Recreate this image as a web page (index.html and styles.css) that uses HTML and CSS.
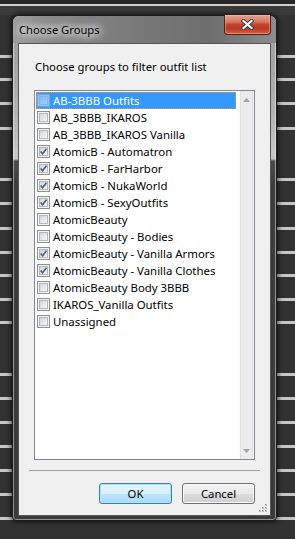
FILE: index.html
```html
<!DOCTYPE html>
<html>
<head>
<meta charset="utf-8">
<title>Choose Groups</title>
<link rel="stylesheet" href="styles.css">
</head>
<body>
<div class="window">
  <div class="titlebar">
    <span class="title">Choose Groups</span>
    <button class="close" aria-label="Close">
      <svg width="13" height="11" viewBox="0 0 13 11"><path d="M2.5 2 L10.5 9 M10.5 2 L2.5 9" stroke="#3a3a3a" stroke-width="4" stroke-linecap="square"/><path d="M2.5 2 L10.5 9 M10.5 2 L2.5 9" stroke="#ffffff" stroke-width="2.2" stroke-linecap="square"/></svg>
    </button>
  </div>
  <div class="client">
    <p class="prompt">Choose groups to filter outfit list</p>
    <div class="listbox">
      <ul class="items">
        <li class="item selected"><span class="cb"><span class="cb-in"></span></span><span class="label">AB-3BBB Outfits</span></li>
        <li class="item"><span class="cb"><span class="cb-in"></span></span><span class="label">AB_3BBB_IKAROS</span></li>
        <li class="item"><span class="cb"><span class="cb-in"></span></span><span class="label">AB_3BBB_IKAROS Vanilla</span></li>
        <li class="item"><span class="cb"><span class="cb-in"><svg class="check" viewBox="0 0 7 7"><path d="M0.6 3.4 L2.6 5.8 L6.4 0.6" fill="none" stroke="#4a5e8e" stroke-width="1.6"/></svg></span></span><span class="label">AtomicB - Automatron</span></li>
        <li class="item"><span class="cb"><span class="cb-in"><svg class="check" viewBox="0 0 7 7"><path d="M0.6 3.4 L2.6 5.8 L6.4 0.6" fill="none" stroke="#4a5e8e" stroke-width="1.6"/></svg></span></span><span class="label">AtomicB - FarHarbor</span></li>
        <li class="item"><span class="cb"><span class="cb-in"><svg class="check" viewBox="0 0 7 7"><path d="M0.6 3.4 L2.6 5.8 L6.4 0.6" fill="none" stroke="#4a5e8e" stroke-width="1.6"/></svg></span></span><span class="label">AtomicB - NukaWorld</span></li>
        <li class="item"><span class="cb"><span class="cb-in"><svg class="check" viewBox="0 0 7 7"><path d="M0.6 3.4 L2.6 5.8 L6.4 0.6" fill="none" stroke="#4a5e8e" stroke-width="1.6"/></svg></span></span><span class="label">AtomicB - SexyOutfits</span></li>
        <li class="item"><span class="cb"><span class="cb-in"></span></span><span class="label">AtomicBeauty</span></li>
        <li class="item"><span class="cb"><span class="cb-in"></span></span><span class="label">AtomicBeauty - Bodies</span></li>
        <li class="item"><span class="cb"><span class="cb-in"><svg class="check" viewBox="0 0 7 7"><path d="M0.6 3.4 L2.6 5.8 L6.4 0.6" fill="none" stroke="#4a5e8e" stroke-width="1.6"/></svg></span></span><span class="label">AtomicBeauty - Vanilla Armors</span></li>
        <li class="item"><span class="cb"><span class="cb-in"><svg class="check" viewBox="0 0 7 7"><path d="M0.6 3.4 L2.6 5.8 L6.4 0.6" fill="none" stroke="#4a5e8e" stroke-width="1.6"/></svg></span></span><span class="label">AtomicBeauty - Vanilla Clothes</span></li>
        <li class="item"><span class="cb"><span class="cb-in"></span></span><span class="label">AtomicBeauty Body 3BBB</span></li>
        <li class="item"><span class="cb"><span class="cb-in"></span></span><span class="label">IKAROS_Vanilla Outfits</span></li>
        <li class="item"><span class="cb"><span class="cb-in"></span></span><span class="label">Unassigned</span></li>
      </ul>
      <div class="scrollbar">
        <span class="sb-btn"><svg width="7" height="4" viewBox="0 0 7 4"><path d="M3.5 0 L7 4 L0 4 Z" fill="#a2a2a2"/></svg></span>
        <span class="sb-track"></span>
        <span class="sb-btn"><svg width="7" height="4" viewBox="0 0 7 4"><path d="M0 0 L7 0 L3.5 4 Z" fill="#a2a2a2"/></svg></span>
      </div>
    </div>
    <hr class="sep">
    <div class="buttons">
      <button class="btn default">OK</button>
      <button class="btn">Cancel</button>
    </div>
    <svg class="grip" width="9" height="9" viewBox="0 0 9 9">
      <g fill="#c2c2c2"><rect x="6" y="0" width="2" height="2"/><rect x="3" y="3" width="2" height="2"/><rect x="6" y="3" width="2" height="2"/><rect x="0" y="6" width="2" height="2"/><rect x="3" y="6" width="2" height="2"/><rect x="6" y="6" width="2" height="2"/></g>
      <g fill="#8e8e8e"><rect x="6" y="0" width="1" height="1"/><rect x="3" y="3" width="1" height="1"/><rect x="6" y="3" width="1" height="1"/><rect x="0" y="6" width="1" height="1"/><rect x="3" y="6" width="1" height="1"/><rect x="6" y="6" width="1" height="1"/></g>
    </svg>
  </div>
</div>
</body>
</html>
```

FILE: styles.css
```css
html, body {
  margin: 0;
}

body {
  width: 295px;
  height: 539px;
  overflow: hidden;
  box-sizing: border-box;
  padding: 15px 0 0 12px;
  font-family: "Noto Sans", "Open Sans", sans-serif;
  font-size: 11.3px;
  color: #000;
  background-color: #323232;
  background-image:
    linear-gradient(to bottom, #282828 0 4px, #cfcfcf 4px 6px, #3a3a3a 6px 15px, transparent 15px),
    linear-gradient(to bottom,
      transparent 55px, #c6c6c6 55px 58px,
      transparent 58px 78px, #c6c6c6 78px 81px,
      transparent 81px 102px, #c6c6c6 102px 105px,
      transparent 105px 127px, #c6c6c6 127px 130px,
      transparent 130px 178px, #c6c6c6 178px 181px,
      transparent 181px 202px, #c6c6c6 202px 205px,
      transparent 205px 227px, #c6c6c6 227px 230px,
      transparent 230px 251px, #c6c6c6 251px 254px,
      transparent 254px 274px, #c6c6c6 274px 277px,
      transparent 277px 298px, #c6c6c6 298px 301px,
      transparent 301px 321px, #c6c6c6 321px 324px,
      transparent 324px 373px, #c6c6c6 373px 376px,
      transparent 376px 397px, #c6c6c6 397px 400px,
      transparent 400px 421px, #c6c6c6 421px 424px,
      transparent 424px 445px, #c6c6c6 445px 448px,
      transparent 448px 469px, #c6c6c6 469px 472px,
      transparent 472px 493px, #c6c6c6 493px 496px,
      transparent 496px 517px, #c6c6c6 517px 520px,
      transparent 520px);
}

/* ---------- window frame ---------- */
.window {
  width: 265px;
  height: 506px;
  box-sizing: border-box;
  display: flex;
  flex-direction: column;
  padding: 0 5px 4px 5px;
  border: 1px solid #1b1b1b;
  border-radius: 7px 7px 4px 4px;
  background: linear-gradient(to bottom,
    #9a9a9a 0, #a6a6a6 50px, #b3b3b3 100px, #c8c8c8 138px, #c4c4c4 143px,
    #4c4c4c 145px, #3c3c3c 170px, #3a3a3a 100%);
  box-shadow: 0 0 5px 1px rgba(0, 0, 0, 0.7), inset 0 0 0 1px rgba(255, 255, 255, 0.45);
}

.titlebar {
  height: 27px;
  flex: none;
  display: flex;
  align-items: flex-start;
  justify-content: space-between;
  margin: 0 -5px;
  padding: 0 5px;
  border-radius: 6px 6px 0 0;
  background: linear-gradient(to right, #9c9c9c 0%, #888 15%, #7a7a7a 45%, #6e6e6e 75%, #8c8c8c 100%);
}

.title {
  margin: 6px 0 0 1px;
  line-height: 15px;
  font-size: 11.2px;
  color: #000;
  text-shadow: 0 0 6px #fff, 0 0 10px #fff, 0 0 14px rgba(255, 255, 255, 0.9);
}

.close {
  width: 47px;
  height: 20px;
  margin-top: -1px;
  padding: 0;
  display: flex;
  align-items: center;
  justify-content: center;
  border: 1px solid #4a2018;
  border-top: none;
  border-radius: 0 0 4px 4px;
  background: linear-gradient(to bottom, #e3a393 0%, #d77a66 35%, #c4442e 50%, #b63a26 70%, #d5603f 100%);
  box-shadow: inset 0 0 0 1px rgba(255, 200, 180, 0.45);
}

.close svg {
  display: block;
}

/* ---------- client area ---------- */
.client {
  flex: 1;
  position: relative;
  display: flex;
  flex-direction: column;
  background: #f0f0f0;
  border: 1px solid #555;
}

.prompt {
  margin: 15px 0 0 16px;
  line-height: 15px;
}

.listbox {
  margin: 16px 0 0 15px;
  width: 221px;
  height: 370px;
  box-sizing: border-box;
  display: flex;
  border: 1px solid #828790;
  background: #fff;
}

.items {
  flex: 1;
  list-style: none;
  margin: 0;
  padding: 1px;
}

.item {
  height: 17px;
  box-sizing: border-box;
  display: flex;
  align-items: center;
  border: 1px solid transparent;
  line-height: 15px;
  font-size: 11.4px;
  white-space: nowrap;
}

.item .label {
  margin-left: 3px;
}

.item.selected {
  background: #3399ff;
  border: 1px dotted #e2904a;
  color: #fff;
}

.cb {
  width: 13px;
  height: 13px;
  box-sizing: border-box;
  flex: none;
  padding: 1px;
  border: 1px solid #8f8f8f;
  background: #f4f4f4;
}

.cb-in {
  display: block;
  width: 9px;
  height: 9px;
  box-sizing: border-box;
  border: 1px solid #b4b7bc;
  background: linear-gradient(135deg, #d2d5d9, #f8f8f8);
}

.check {
  display: block;
  width: 7px;
  height: 7px;
}

.selected .cb {
  border-color: #6ea6e6;
  background: #92c4f8;
}

.selected .cb-in {
  border-color: #7fb4ee;
  background: linear-gradient(135deg, #84b9f2, #a3cffb);
}

.scrollbar {
  width: 17px;
  flex: none;
  display: flex;
  flex-direction: column;
  background: linear-gradient(to right, #fcfcfc 0 3px, #e0e0e0 3px 4px, #ececec 4px 15px, #dedede 15px 16px, #f6f6f6 16px);
}

.sb-btn {
  height: 17px;
  display: flex;
  align-items: center;
  justify-content: center;
  padding-left: 1px;
}

.sb-btn svg {
  display: block;
}

.sb-track {
  flex: 1;
}

.sep {
  margin: 10px 0 0 10px;
  width: 231px;
  height: 0;
  border: 0;
  border-top: 1px solid #a0a0a0;
}

.buttons {
  margin-top: 12px;
  display: flex;
  justify-content: flex-end;
  gap: 10px;
  padding-right: 15px;
}

.btn {
  width: 73px;
  height: 21px;
  padding: 0;
  font-family: "Noto Sans", "Open Sans", sans-serif;
  font-size: 11.3px;
  color: #000;
  border: 1px solid #707070;
  border-radius: 3px;
  background: linear-gradient(to bottom, #f2f2f2 0%, #ebebeb 50%, #dddddd 50%, #cfcfcf 100%);
  box-shadow: inset 0 0 0 1px #fbfbfb;
}

.btn.default {
  border-color: #3c7fb1;
  background: linear-gradient(to bottom, #e6f5fd 0%, #d9f0fc 50%, #bee6fd 50%, #a9daf6 100%);
  box-shadow: inset 0 0 0 1px #a8e4fb;
}

.grip {
  position: absolute;
  right: 2px;
  bottom: 2px;
  display: block;
}
```
